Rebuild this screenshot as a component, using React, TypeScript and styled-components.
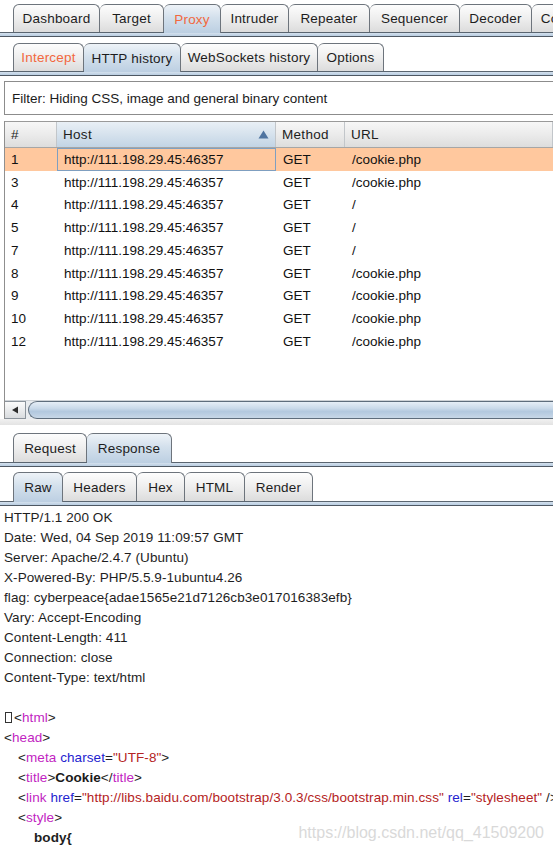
import React from 'react';
import styled, { createGlobalStyle } from 'styled-components';

const Global = createGlobalStyle`
  html, body { margin: 0; padding: 0; background: #ffffff; }
  body {
    font-family: "Liberation Sans", Arial, sans-serif;
    font-size: 13.5px;
    color: #1b1b1b;
  }
`;

const Page = styled.div`
  width: 553px;
  height: 851px;
  overflow: hidden;
  position: relative;
  background: #ffffff;
  display: flex;
  flex-direction: column;
`;

const Strip = styled.div<{ $mt: number }>`
  display: flex;
  flex-direction: column;
  margin-top: ${(p) => p.$mt}px;
  flex: none;
`;

const TabRow = styled.div<{ $h: number }>`
  display: flex;
  align-items: flex-end;
  height: ${(p) => p.$h}px;
  padding-left: 13px;
  white-space: nowrap;
`;

const Tab = styled.div<{ $w: number; $sel?: boolean; $accent?: boolean }>`
  flex: none;
  box-sizing: border-box;
  width: ${(p) => p.$w}px;
  height: ${(p) => (p.$sel ? 'calc(100% + 1px)' : '100%')};
  margin-bottom: ${(p) => (p.$sel ? '-1px' : '0')};
  position: ${(p) => (p.$sel ? 'relative' : 'static')};
  z-index: ${(p) => (p.$sel ? 2 : 'auto')};
  border: 1px solid #6d747c;
  border-bottom: none;
  border-left: none;
  border-radius: 6px 6px 0 0;
  background: ${(p) =>
    p.$sel
      ? 'linear-gradient(#eef3f8 0%, #d3e0ec 45%, #bccfe2 100%)'
      : 'linear-gradient(#fdfdfd 0%, #eeeeee 50%, #dcdcdc 100%)'};
  color: ${(p) => (p.$accent ? '#f2683e' : '#1d1d1d')};
  display: flex;
  align-items: center;
  justify-content: center;
  letter-spacing: 0.2px;
  &:first-child {
    border-left: 1px solid #6d747c;
  }
`;

const Band = styled.div`
  height: 5px;
  box-sizing: border-box;
  border-top: 1px solid #5a6570;
  border-bottom: 1px solid #4e5863;
  background: linear-gradient(#d4e1ee, #b8cce0);
`;

const Filter = styled.div`
  flex: none;
  margin: 5px 0 0 4px;
  height: 34px;
  box-sizing: border-box;
  border: 1px solid #8c8c8c;
  border-right: none;
  background: #ffffff;
  display: flex;
  align-items: center;
  padding-left: 7px;
  color: #1b1b1b;
`;

const Table = styled.div`
  flex: none;
  margin: 6px 0 0 4px;
  border-left: 1px solid #8f8f8f;
  display: flex;
  flex-direction: column;
`;

const cols = '52px 219px 69px 1fr';

const HeadRow = styled.div`
  display: grid;
  grid-template-columns: ${cols};
  height: 27px;
  box-sizing: border-box;
  border-top: 1px solid #9a9a9a;
  border-bottom: 1px solid #a6a6a6;
`;

const HeadCell = styled.div<{ $sorted?: boolean }>`
  position: relative;
  display: flex;
  align-items: center;
  padding-left: 6px;
  box-sizing: border-box;
  border-right: 1px solid #c2c6ca;
  background: ${(p) =>
    p.$sorted
      ? 'linear-gradient(#e9f0f6 0%, #d6e2ed 50%, #c2d4e5 100%)'
      : 'linear-gradient(#f7f7f7 0%, #ebebeb 50%, #dddddd 100%)'};
  color: #1d1d1d;
  letter-spacing: 0.3px;
`;

const SortArrow = styled.svg`
  position: absolute;
  right: 6px;
  top: 8px;
`;

const Body = styled.div`
  height: 252px;
  background: #ffffff;
  display: flex;
  flex-direction: column;
`;

const Row = styled.div<{ $sel?: boolean }>`
  display: grid;
  grid-template-columns: ${cols};
  height: 22.75px;
  background: ${(p) => (p.$sel ? '#ffc89e' : '#ffffff')};
  color: #111111;
`;

const Cell = styled.div<{ $focus?: boolean }>`
  display: flex;
  align-items: center;
  padding-left: ${(p) => (p.$focus ? 6 : 7)}px;
  box-sizing: border-box;
  border: ${(p) => (p.$focus ? '1px solid #7f9fc0' : 'none')};
  &:first-child {
    padding-left: 6px;
  }
`;

const Scrollbar = styled.div`
  height: 19px;
  display: flex;
  background: #e9ecef;
  box-sizing: border-box;
  border-top: 1px solid #cfd3d7;
`;

const ScrollBtn = styled.div`
  width: 21px;
  box-sizing: border-box;
  border: 1px solid #8c949c;
  border-left: none;
  background: linear-gradient(#fbfbfb, #d9dcdf);
  display: flex;
  align-items: center;
  justify-content: center;
`;

const Thumb = styled.div`
  flex: 1;
  margin-left: 2px;
  box-sizing: border-box;
  border: 1px solid #5e6d7c;
  border-right: none;
  border-radius: 9px 0 0 9px;
  background: linear-gradient(#e6eef6 0%, #c9d9e9 40%, #b2c8de 60%, #c7d7e7 100%);
`;

const Divider = styled.div`
  flex: none;
  height: 6px;
  background: linear-gradient(#f1f1f1, #e3e3e3);
  margin-bottom: 8px;
`;

const Content = styled.div`
  flex: 1;
  padding: 2px 0 0 4px;
  background: #ffffff;
  overflow: hidden;
  white-space: nowrap;
  letter-spacing: 0.08px;
`;

const Line = styled.div<{ $indent?: number; $bold?: boolean }>`
  height: 20px;
  line-height: 20px;
  padding-left: ${(p) => p.$indent || 0}px;
  font-weight: ${(p) => (p.$bold ? 'bold' : 'normal')};
  color: #1e1e1e;
`;

const TagName = styled.span`
  color: #c21fc2;
`;
const AttrName = styled.span`
  color: #2323cf;
`;
const AttrVal = styled.span`
  color: #b42323;
`;
const Strong = styled.span`
  font-weight: bold;
  color: #1a1a1a;
`;
const BoxChar = styled.span`
  display: inline-block;
  width: 5px;
  height: 9px;
  border: 1px solid #333;
  margin: 0 2px 0 1px;
  vertical-align: -1px;
`;

const Watermark = styled.div`
  position: absolute;
  right: 9px;
  bottom: 9px;
  font-size: 16px;
  line-height: 18px;
  color: #d9d9d9;
  font-family: "Liberation Sans", Arial, sans-serif;
`;

const topTabs = [
  ['Dashboard', 87],
  ['Target', 64],
  ['Proxy', 57],
  ['Intruder', 68],
  ['Repeater', 81],
  ['Sequencer', 90],
  ['Decoder', 72],
  ['Comparer', 80],
] as const;

const subTabs = [
  ['Intercept', 71],
  ['HTTP history', 97],
  ['WebSockets history', 137],
  ['Options', 66],
] as const;

const reqTabs = [
  ['Request', 74],
  ['Response', 85],
] as const;

const rawTabs = [
  ['Raw', 50],
  ['Headers', 74],
  ['Hex', 48],
  ['HTML', 60],
  ['Render', 68],
] as const;

const rows = [
  ['1', '/cookie.php'],
  ['3', '/cookie.php'],
  ['4', '/'],
  ['5', '/'],
  ['7', '/'],
  ['8', '/cookie.php'],
  ['9', '/cookie.php'],
  ['10', '/cookie.php'],
  ['12', '/cookie.php'],
];

const headers = [
  'HTTP/1.1 200 OK',
  'Date: Wed, 04 Sep 2019 11:09:57 GMT',
  'Server: Apache/2.4.7 (Ubuntu)',
  'X-Powered-By: PHP/5.5.9-1ubuntu4.26',
  'flag: cyberpeace{adae1565e21d7126cb3e017016383efb}',
  'Vary: Accept-Encoding',
  'Content-Length: 411',
  'Connection: close',
  'Content-Type: text/html',
];

export default function App() {
  return (
    <>
      <Global />
      <Page>
        <Strip $mt={4}>
          <TabRow $h={28}>
            {topTabs.map(([label, w]) => (
              <Tab key={label} $w={w} $sel={label === 'Proxy'} $accent={label === 'Proxy'}>
                {label}
              </Tab>
            ))}
          </TabRow>
          <Band />
        </Strip>

        <Strip $mt={6}>
          <TabRow $h={28}>
            {subTabs.map(([label, w]) => (
              <Tab key={label} $w={w} $sel={label === 'HTTP history'} $accent={label === 'Intercept'}>
                {label}
              </Tab>
            ))}
          </TabRow>
          <Band />
        </Strip>

        <Filter>Filter: Hiding CSS, image and general binary content</Filter>

        <Table>
          <HeadRow>
            <HeadCell>#</HeadCell>
            <HeadCell $sorted>
              Host
              <SortArrow width="11" height="9" viewBox="0 0 11 9">
                <path d="M5.5 0.5 L10.5 8.5 L0.5 8.5 Z" fill="#4f74a0" />
              </SortArrow>
            </HeadCell>
            <HeadCell>Method</HeadCell>
            <HeadCell>URL</HeadCell>
          </HeadRow>
          <Body>
            {rows.map(([n, url], i) => (
              <Row key={n} $sel={i === 0}>
                <Cell>{n}</Cell>
                <Cell $focus={i === 0}>http://111.198.29.45:46357</Cell>
                <Cell>GET</Cell>
                <Cell>{url}</Cell>
              </Row>
            ))}
          </Body>
          <Scrollbar>
            <ScrollBtn>
              <svg width="8" height="8" viewBox="0 0 8 8">
                <path d="M1 4 L7 0.5 L7 7.5 Z" fill="#2c2c2c" />
              </svg>
            </ScrollBtn>
            <Thumb />
          </Scrollbar>
        </Table>

        <Divider />

        <Strip $mt={0}>
          <TabRow $h={29}>
            {reqTabs.map(([label, w]) => (
              <Tab key={label} $w={w} $sel={label === 'Response'}>
                {label}
              </Tab>
            ))}
          </TabRow>
          <Band />
        </Strip>

        <Strip $mt={5}>
          <TabRow $h={29}>
            {rawTabs.map(([label, w]) => (
              <Tab key={label} $w={w} $sel={label === 'Raw'}>
                {label}
              </Tab>
            ))}
          </TabRow>
          <Band />
        </Strip>

        <Content>
          {headers.map((h) => (
            <Line key={h}>{h}</Line>
          ))}
          <Line />
          <Line>
            <BoxChar />
            &lt;<TagName>html</TagName>&gt;
          </Line>
          <Line>
            &lt;<TagName>head</TagName>&gt;
          </Line>
          <Line $indent={14}>
            &lt;<TagName>meta</TagName> <AttrName>charset</AttrName>=<AttrVal>"UTF-8"</AttrVal>&gt;
          </Line>
          <Line $indent={14}>
            &lt;<TagName>title</TagName>&gt;<Strong>Cookie</Strong>&lt;/<TagName>title</TagName>&gt;
          </Line>
          <Line $indent={14}>
            &lt;<TagName>link</TagName> <AttrName>href</AttrName>=
            <AttrVal>"http://libs.baidu.com/bootstrap/3.0.3/css/bootstrap.min.css"</AttrVal>{' '}
            <AttrName>rel</AttrName>=<AttrVal>"stylesheet"</AttrVal> /&gt;
          </Line>
          <Line $indent={14}>
            &lt;<TagName>style</TagName>&gt;
          </Line>
          <Line $indent={30} $bold>
            body{'{'}
          </Line>
        </Content>

        <Watermark>https://blog.csdn.net/qq_41509200</Watermark>
      </Page>
    </>
  );
}
